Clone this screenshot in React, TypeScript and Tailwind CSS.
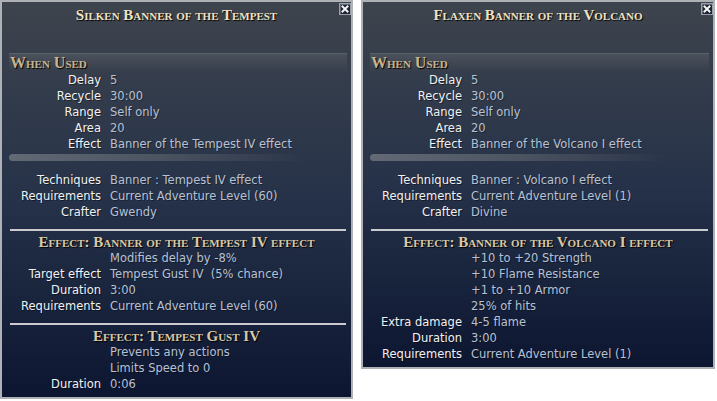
import React from 'react';

type Row = { label?: string; value: string };

type Section =
  | { kind: 'usedHeader' }
  | { kind: 'rows'; rows: Row[] }
  | { kind: 'bar' }
  | { kind: 'line' }
  | { kind: 'heading'; text: string };

const CloseButton: React.FC = () => (
  <div className="absolute top-[1px] right-0 w-[12px] h-[12px] border border-[#9aa0aa] bg-[#1d2330] flex items-center justify-center shadow-[inset_1px_1px_0_#606774]">
    <svg width="8" height="8" viewBox="0 0 8 8">
      <path d="M1.5 1.5 L6.5 6.5 M6.5 1.5 L1.5 6.5" stroke="#f4f4f4" strokeWidth="2" strokeLinecap="square" />
    </svg>
  </div>
);

const serif = { fontFamily: '"Liberation Serif", "Times New Roman", serif' };

const Rows: React.FC<{ rows: Row[] }> = ({ rows }) => (
  <div className="flex flex-col">
    {rows.map((r, i) => (
      <div key={i} className="flex h-[16px] items-center leading-[16px]">
        <div className="w-[99px] shrink-0 text-right text-[#f1f1f1] [text-shadow:1px_1px_0_rgba(0,0,0,0.45)]">
          {r.label ?? ''}
        </div>
        <div className="ml-[9px] text-[#b7c1d3] whitespace-pre [text-shadow:1px_1px_0_rgba(0,0,0,0.35)]">
          {r.value}
        </div>
      </div>
    ))}
  </div>
);

const Panel: React.FC<{ title: string; sections: Section[]; width: string }> = ({ title, sections, width }) => (
  <div
    className={`relative ${width} border-2 border-[#aeb1b6] bg-gradient-to-b from-[#3e444d] via-[#263249] to-[#0d1631] pb-[5px]`}
  >
    <CloseButton />
    <div
      className="h-[25px] mt-[1px] flex items-center justify-center text-[15px] font-bold text-[#efe2c3] [font-variant:small-caps] [text-shadow:1px_1px_1px_#000]"
      style={serif}
    >
      {title}
    </div>
    <div className="h-[25px]" />
    {sections.map((s, i) => {
      if (s.kind === 'usedHeader')
        return (
          <div
            key={i}
            className="ml-[7px] mr-[4px] h-[19px] flex items-center pl-[1px] border-t border-[#59606b] bg-gradient-to-b from-[#4b515b] to-transparent text-[16px] font-bold text-[#c7b48f] [font-variant:small-caps] [text-shadow:1px_1px_1px_#000]"
            style={serif}
          >
            When Used
          </div>
        );
      if (s.kind === 'rows') return <Rows key={i} rows={s.rows} />;
      if (s.kind === 'bar')
        return (
          <div key={i} className="ml-[7px] mr-[45px] mt-[2px] mb-[11px] h-[7px] rounded-l-full bg-gradient-to-r from-[#636a76] via-[#4c5361] to-transparent" />
        );
      if (s.kind === 'line')
        return <div key={i} className="ml-[8px] mr-[5px] mt-[9px] mb-[3px] h-[2px] bg-[#c9cbcf]" />;
      return (
        <div
          key={i}
          className="h-[16px] flex items-center justify-center text-[15px] font-bold text-[#d9c9a6] [font-variant:small-caps] [text-shadow:1px_1px_1px_#000]"
          style={serif}
        >
          {s.text}
        </div>
      );
    })}
  </div>
);

const left: Section[] = [
  { kind: 'usedHeader' },
  {
    kind: 'rows',
    rows: [
      { label: 'Delay', value: '5' },
      { label: 'Recycle', value: '30:00' },
      { label: 'Range', value: 'Self only' },
      { label: 'Area', value: '20' },
      { label: 'Effect', value: 'Banner of the Tempest IV effect' },
    ],
  },
  { kind: 'bar' },
  {
    kind: 'rows',
    rows: [
      { label: 'Techniques', value: 'Banner : Tempest IV effect' },
      { label: 'Requirements', value: 'Current Adventure Level (60)' },
      { label: 'Crafter', value: 'Gwendy' },
    ],
  },
  { kind: 'line' },
  { kind: 'heading', text: 'Effect: Banner of the Tempest IV effect' },
  {
    kind: 'rows',
    rows: [
      { value: 'Modifies delay by -8%' },
      { label: 'Target effect', value: 'Tempest Gust IV  (5% chance)' },
      { label: 'Duration', value: '3:00' },
      { label: 'Requirements', value: 'Current Adventure Level (60)' },
    ],
  },
  { kind: 'line' },
  { kind: 'heading', text: 'Effect: Tempest Gust IV' },
  {
    kind: 'rows',
    rows: [
      { value: 'Prevents any actions' },
      { value: 'Limits Speed to 0' },
      { label: 'Duration', value: '0:06' },
    ],
  },
];

const right: Section[] = [
  { kind: 'usedHeader' },
  {
    kind: 'rows',
    rows: [
      { label: 'Delay', value: '5' },
      { label: 'Recycle', value: '30:00' },
      { label: 'Range', value: 'Self only' },
      { label: 'Area', value: '20' },
      { label: 'Effect', value: 'Banner of the Volcano I effect' },
    ],
  },
  { kind: 'bar' },
  {
    kind: 'rows',
    rows: [
      { label: 'Techniques', value: 'Banner : Volcano I effect' },
      { label: 'Requirements', value: 'Current Adventure Level (1)' },
      { label: 'Crafter', value: 'Divine' },
    ],
  },
  { kind: 'line' },
  { kind: 'heading', text: 'Effect: Banner of the Volcano I effect' },
  {
    kind: 'rows',
    rows: [
      { value: '+10 to +20 Strength' },
      { value: '+10 Flame Resistance' },
      { value: '+1 to +10 Armor' },
      { value: '25% of hits' },
      { label: 'Extra damage', value: '4-5 flame' },
      { label: 'Duration', value: '3:00' },
      { label: 'Requirements', value: 'Current Adventure Level (1)' },
    ],
  },
];

const App: React.FC = () => {
  return (
    <div
      className="min-h-screen bg-white flex items-start gap-[8px] text-[11.5px]"
      style={{ fontFamily: '"DejaVu Sans", Verdana, sans-serif' }}
    >
      <Panel title="Silken Banner of the Tempest" sections={left} width="w-[353px]" />
      <Panel title="Flaxen Banner of the Volcano" sections={right} width="w-[354px]" />
    </div>
  );
};

export default App;
